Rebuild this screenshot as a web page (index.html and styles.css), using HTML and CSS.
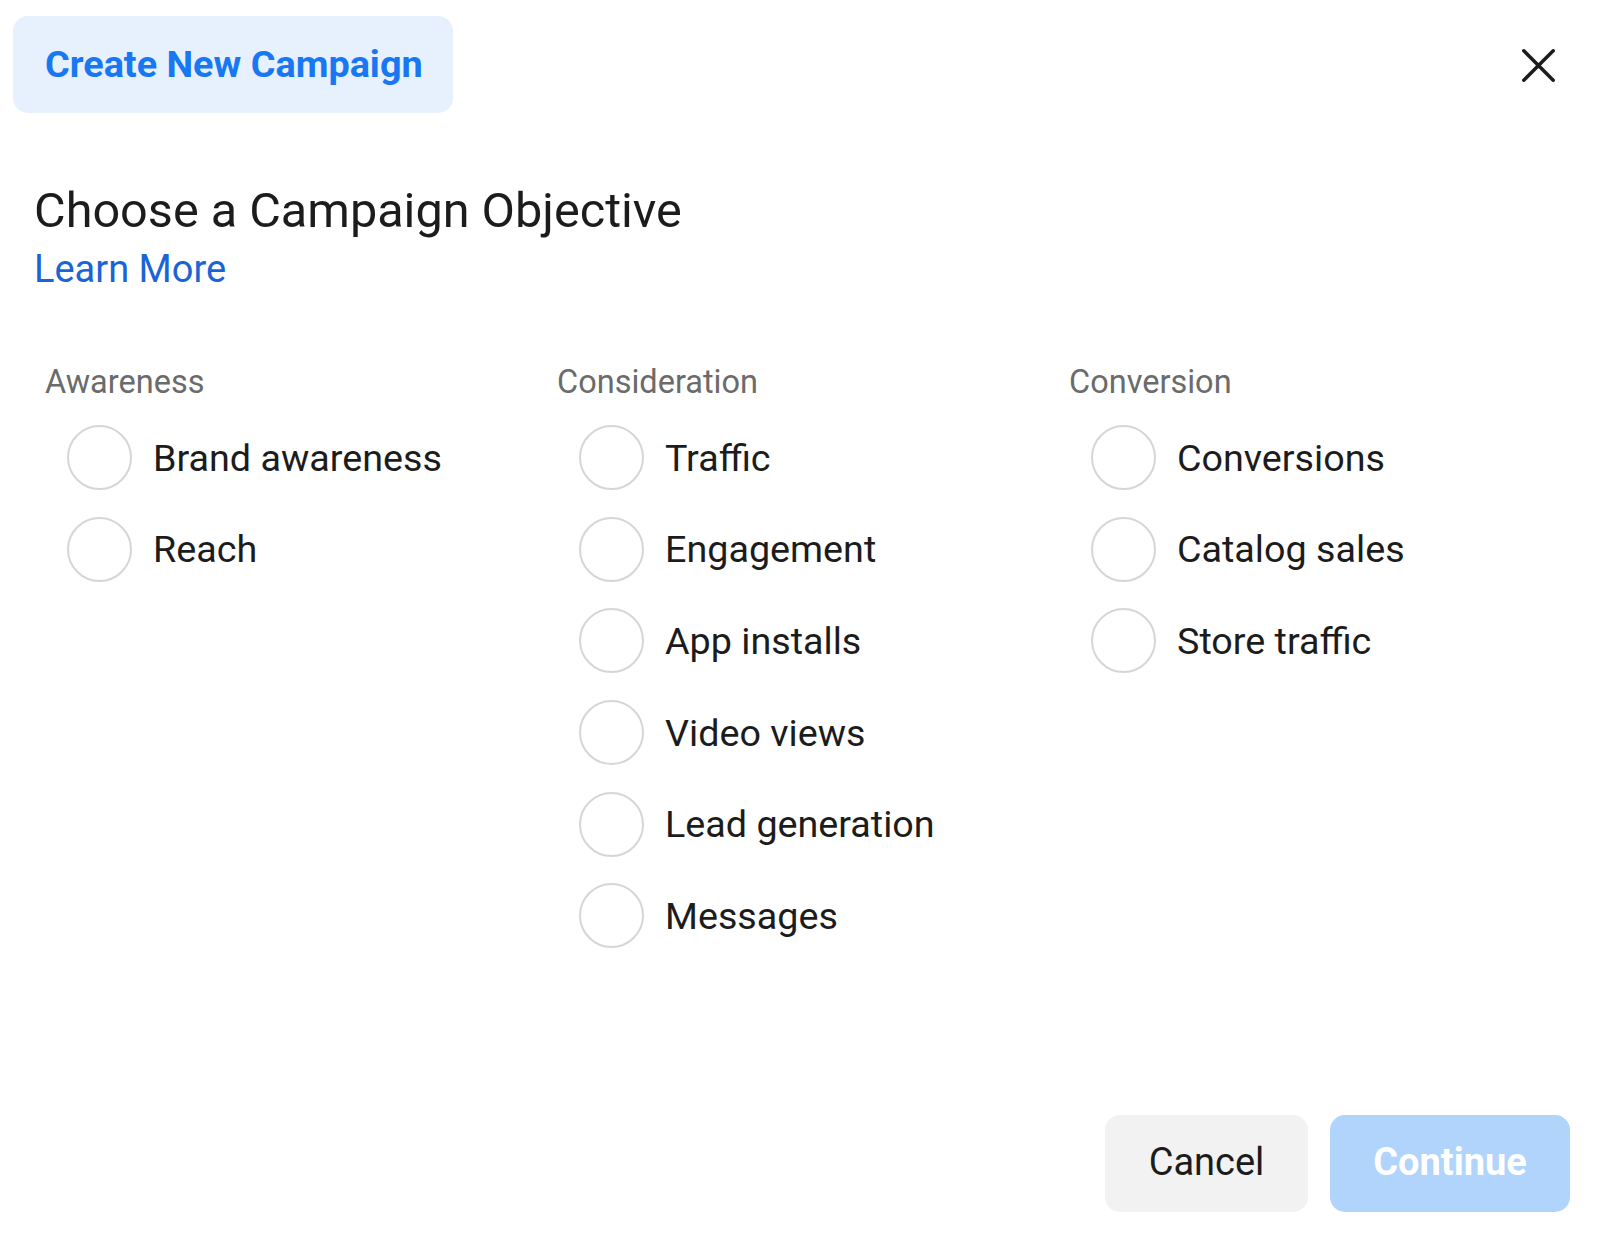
FILE: index.html
```html
<!DOCTYPE html>
<html lang="en">
<head>
    <meta charset="UTF-8">
    <meta name="viewport" content="width=device-width, initial-scale=1.0">
    <title>Create New Campaign</title>
    <link rel="stylesheet" href="styles.css">
</head>
<body>

    <div class="dialog">
        <div class="dialog-header">
            <div class="tab">Create New Campaign</div>
            <button class="close" aria-label="Close">
                <svg width="33" height="33" viewBox="0 0 33 33">
                    <path d="M1.8 1.8 L31.2 31.2 M31.2 1.8 L1.8 31.2" stroke="#1c1c1c" stroke-width="3.5" stroke-linecap="round"/>
                </svg>
            </button>
        </div>

        <h1 class="title">Choose a Campaign Objective</h1>
        <a class="learn" href="#">Learn More</a>

        <div class="objectives">
            <div class="group">
                <h2>Awareness</h2>
                <label class="option"><span class="radio"></span>Brand awareness</label>
                <label class="option"><span class="radio"></span>Reach</label>
            </div>
            <div class="group">
                <h2>Consideration</h2>
                <label class="option"><span class="radio"></span>Traffic</label>
                <label class="option"><span class="radio"></span>Engagement</label>
                <label class="option"><span class="radio"></span>App installs</label>
                <label class="option"><span class="radio"></span>Video views</label>
                <label class="option"><span class="radio"></span>Lead generation</label>
                <label class="option"><span class="radio"></span>Messages</label>
            </div>
            <div class="group">
                <h2>Conversion</h2>
                <label class="option"><span class="radio"></span>Conversions</label>
                <label class="option"><span class="radio"></span>Catalog sales</label>
                <label class="option"><span class="radio"></span>Store traffic</label>
            </div>
        </div>

        <div class="actions">
            <button class="btn cancel">Cancel</button>
            <button class="btn continue">Continue</button>
        </div>
    </div>

</body>
</html>
```

FILE: styles.css
```css
body {
    font-family: Roboto, "Liberation Sans", Arial, sans-serif;
    background-color: #fff;
    color: #1c1c1c;
    margin: 0;
    padding: 0;
}
.dialog {
    width: 1600px;
    height: 1234px;
    box-sizing: border-box;
    padding: 16px 30px 0 13px;
    display: flex;
    flex-direction: column;
}
.dialog-header {
    display: flex;
    justify-content: space-between;
    align-items: flex-start;
}
.tab {
    background-color: #e7f0fd;
    color: #1877f2;
    font-weight: bold;
    font-size: 37.8px;
    height: 97px;
    line-height: 97px;
    padding: 0 30px 0 32px;
    border-radius: 15px;
}
.close {
    background: none;
    border: none;
    padding: 0;
    margin-top: 33px;
    margin-right: 15px;
    cursor: pointer;
}
.close svg {
    display: block;
}
.title {
    font-size: 48.6px;
    font-weight: normal;
    color: #1c1c1c;
    margin: 69px 0 0 21px;
    line-height: 58px;
}
.learn {
    font-size: 38px;
    color: #1a64d6;
    text-decoration: none;
    margin: 6px 0 0 21px;
    line-height: 46px;
    align-self: flex-start;
}
.objectives {
    display: grid;
    grid-template-columns: 512px 512px 512px;
    margin: 71px 0 0 32px;
}
.group h2 {
    font-size: 32.5px;
    font-weight: normal;
    color: #6b6b6b;
    margin: 0 0 11px;
    line-height: 38px;
}
.option {
    display: flex;
    align-items: center;
    gap: 21px;
    font-size: 37.7px;
    color: #1c1c1c;
    height: 91.6px;
    padding-left: 22px;
    cursor: pointer;
}
.radio {
    width: 61px;
    height: 61px;
    border: 2px solid #d6d6d6;
    border-radius: 50%;
    flex-shrink: 0;
}
.actions {
    margin-top: auto;
    margin-bottom: 22px;
    display: flex;
    justify-content: flex-end;
    gap: 22px;
}
.btn {
    font-family: Roboto, "Liberation Sans", Arial, sans-serif;
    font-size: 38px;
    height: 97px;
    padding: 0 0 3px;
    border: none;
    border-radius: 15px;
    cursor: pointer;
}
.cancel {
    width: 203px;
    background-color: #f2f2f2;
    color: #1c1c1c;
}
.continue {
    width: 240px;
    background-color: #b0d4fc;
    color: #fff;
    font-weight: bold;
}
```
